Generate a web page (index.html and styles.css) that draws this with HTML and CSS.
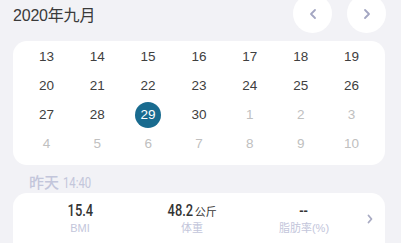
FILE: index.html
```html
<!DOCTYPE html>
<html lang="zh">
<head>
<meta charset="utf-8">
<link rel="stylesheet" href="styles.css">
</head>
<body>
<div class="page">
  <div class="header">
    <div class="title">2020年九月</div>
    <div class="navs">
      <div class="nav"><svg width="10" height="12" viewBox="0 0 10 12"><path d="M7 2 L3 6 L7 10" fill="none" stroke="#a3a6c2" stroke-width="1.8" stroke-linecap="round" stroke-linejoin="round"/></svg></div>
      <div class="nav"><svg width="10" height="12" viewBox="0 0 10 12"><path d="M3 2 L7 6 L3 10" fill="none" stroke="#a3a6c2" stroke-width="1.8" stroke-linecap="round" stroke-linejoin="round"/></svg></div>
    </div>
  </div>
  <div class="cal">
    <span class="d">13</span><span class="d">14</span><span class="d">15</span><span class="d">16</span><span class="d">17</span><span class="d">18</span><span class="d">19</span>
    <span class="d">20</span><span class="d">21</span><span class="d">22</span><span class="d">23</span><span class="d">24</span><span class="d">25</span><span class="d">26</span>
    <span class="d">27</span><span class="d">28</span><span class="d sel"><span class="dot">29</span></span><span class="d">30</span><span class="d off">1</span><span class="d off">2</span><span class="d off">3</span>
    <span class="d off">4</span><span class="d off">5</span><span class="d off">6</span><span class="d off">7</span><span class="d off">8</span><span class="d off">9</span><span class="d off">10</span>
  </div>
  <div class="when"><span class="day">昨天</span><span class="time">14:40</span></div>
  <div class="rec">
    <div class="col"><div class="val"><span class="num">15.4</span></div><div class="lab">BMI</div></div>
    <div class="col"><div class="val"><span class="num">48.2</span><span class="unit">公斤</span></div><div class="lab">体重</div></div>
    <div class="col"><div class="val"><span class="num">--</span></div><div class="lab">脂肪率(%)</div></div>
    <div class="more"><svg width="8" height="10" viewBox="0 0 8 10"><path d="M2.5 1.5 L5.5 5 L2.5 8.5" fill="none" stroke="#a9abc3" stroke-width="1.8" stroke-linecap="round" stroke-linejoin="round"/></svg></div>
  </div>
</div>
</body>
</html>
```
FILE: styles.css
```css
html, body {
  margin: 0;
  padding: 0;
  background: #f2f2f6;
  font-family: "Helvetica Neue", "Liberation Sans", Arial, "Noto Sans CJK SC", sans-serif;
  overflow: hidden;
}
.page {
  width: 401px;
  height: 243px;
  overflow: hidden;
}
.header {
  display: flex;
  align-items: center;
  justify-content: space-between;
  height: 39px;
  margin-top: -6px;
  padding: 0 15px 0 13px;
}
.title {
  font-size: 16px;
  color: #3a3a3a;
  letter-spacing: -0.2px;
}
.navs {
  display: flex;
  gap: 15px;
}
.nav {
  width: 39px;
  height: 39px;
  border-radius: 50%;
  background: #fff;
  display: flex;
  align-items: center;
  justify-content: center;
}
.cal {
  margin: 8px 16px 0 13px;
  background: #fff;
  border-radius: 14px;
  padding: 1px 8px 7px 8px;
  display: grid;
  grid-template-columns: repeat(7, 1fr);
  grid-auto-rows: 29px;
}
.d {
  display: flex;
  align-items: center;
  justify-content: center;
  font-size: 13.5px;
  color: #404040;
}
.d.off {
  color: #c0c0c0;
}
.dot {
  width: 26px;
  height: 26px;
  border-radius: 50%;
  background: #196b8f;
  color: #fff;
  display: flex;
  align-items: center;
  justify-content: center;
}
.when {
  height: 22px;
  padding: 6px 0 0 29px;
  display: flex;
  align-items: baseline;
  color: #c3c6db;
}
.day {
  font-family: "Noto Sans CJK SC", sans-serif;
  font-size: 15px;
  font-weight: 500;
}
.time {
  display: inline-block;
  font-family: "Roboto", sans-serif;
  font-size: 14.5px;
  margin-left: 4px;
  transform: scaleX(0.78);
  transform-origin: left center;
}
.rec {
  margin: 0 16px 0 13px;
  background: #fff;
  border-radius: 14px;
  height: 60px;
  padding: 8px 0 0 11px;
  display: grid;
  grid-template-columns: 112px 112px 112px 1fr;
  align-items: start;
}
.col {
  display: flex;
  flex-direction: column;
  align-items: center;
}
.val {
  display: flex;
  align-items: baseline;
  height: 20px;
  line-height: 20px;
  color: #333;
}
.num {
  display: inline-block;
  font-family: "Roboto", sans-serif;
  font-weight: 500;
  font-size: 16.5px;
  transform: scaleX(0.78);
  margin: 0 -3px;
}
.unit {
  font-family: "Noto Sans CJK SC", sans-serif;
  font-weight: normal;
  font-size: 11px;
  margin-left: 1px;
}
.lab {
  font-size: 11px;
  line-height: 14px;
  color: #c3c6db;
}
.more {
  display: flex;
  justify-content: center;
  padding: 13px 6px 0 0;
}
```
